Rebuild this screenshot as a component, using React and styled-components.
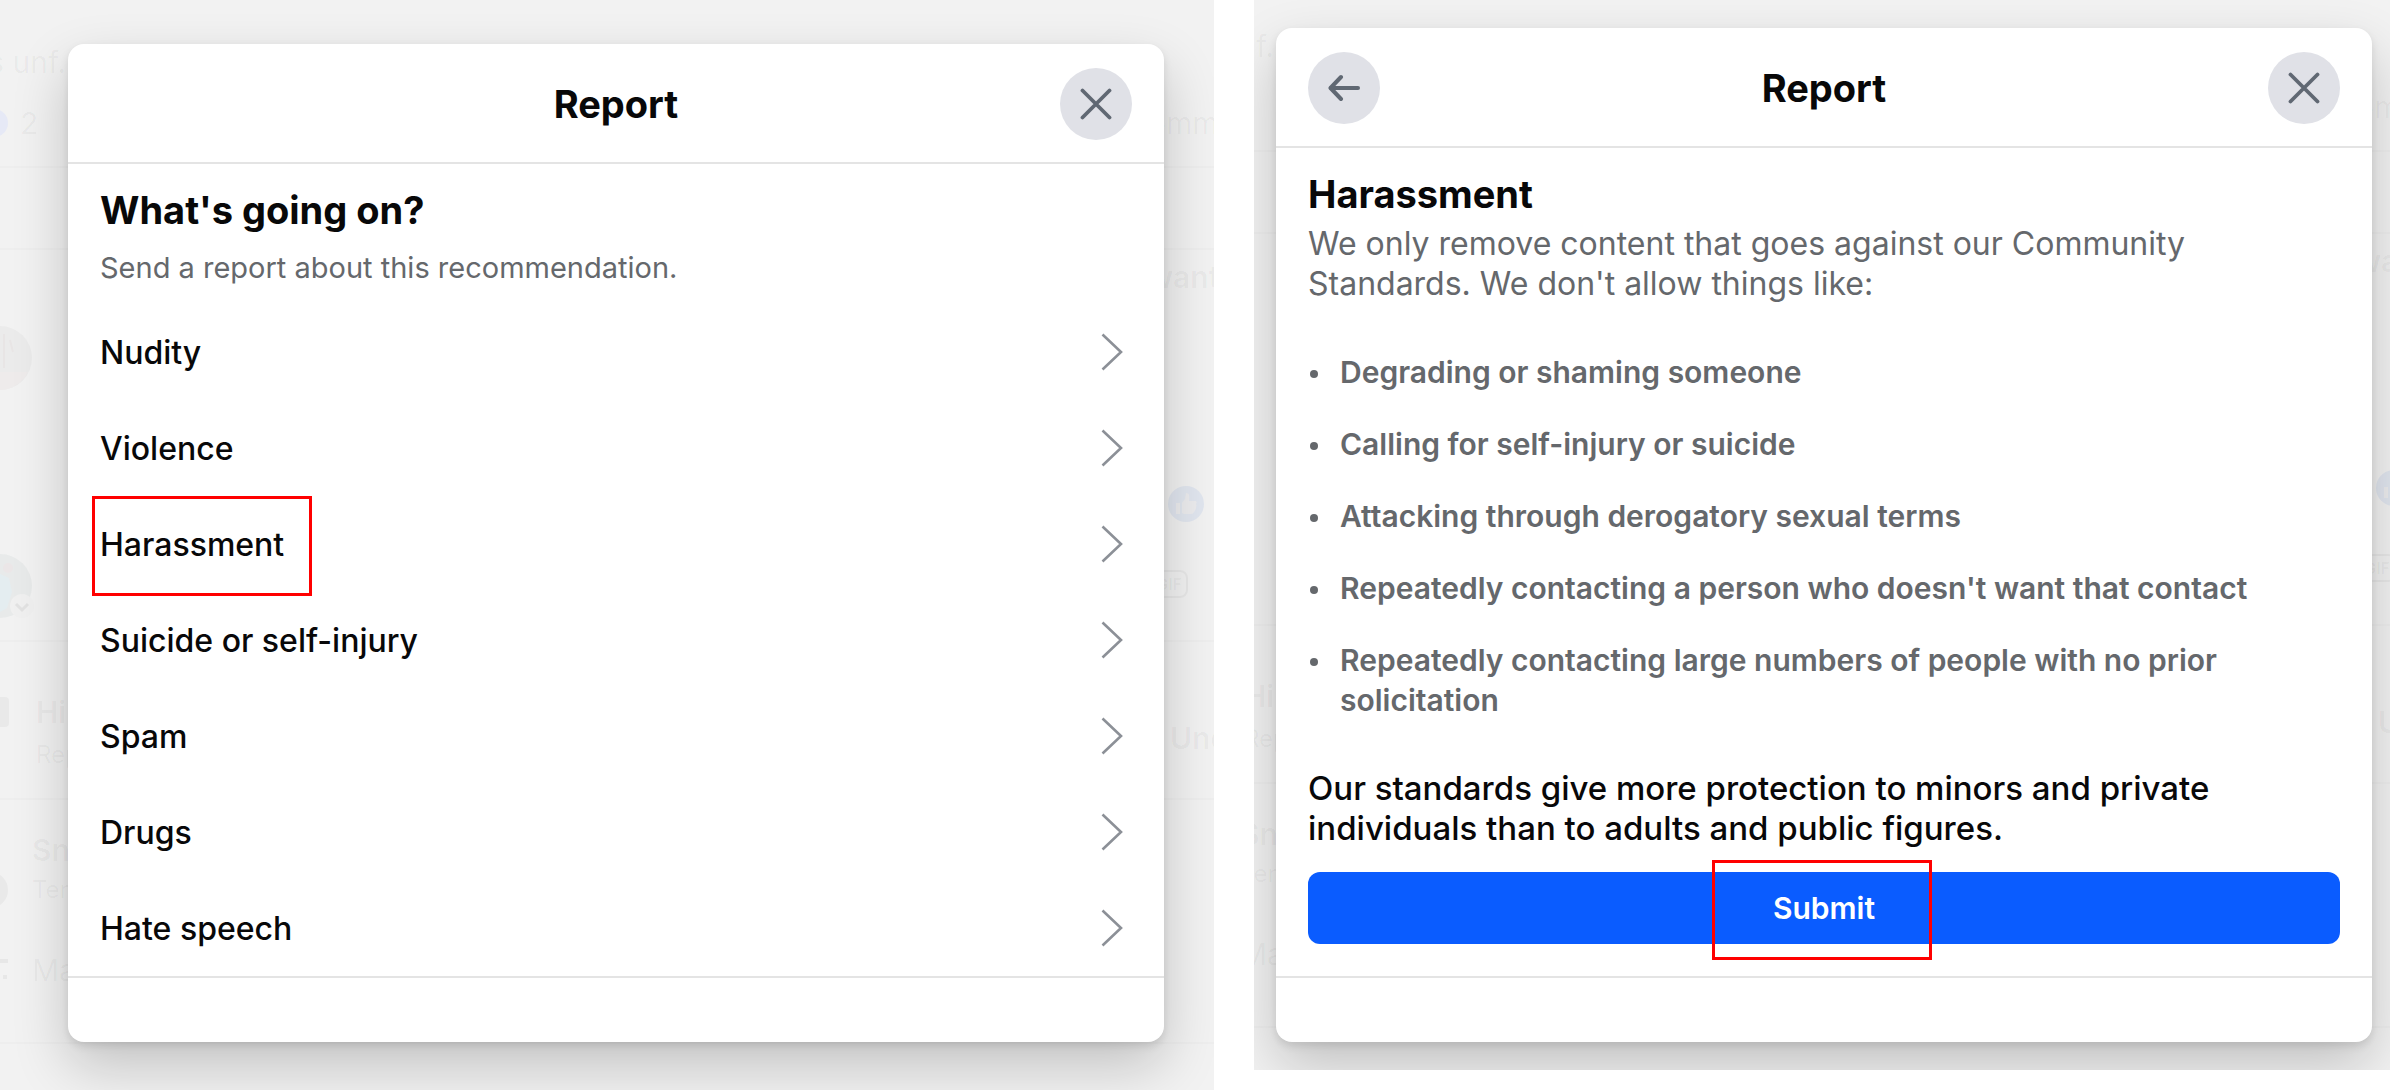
import React from "react";
import styled, { createGlobalStyle } from "styled-components";

const GlobalStyle = createGlobalStyle`
  * { box-sizing: border-box; }
  body {
    margin: 0;
    background: #fff;
    color: #080809;
    font-family: Inter, Roboto, "Liberation Sans", sans-serif;
  }
  h1, h2, p, ul { margin: 0; padding: 0; }
  ul { list-style: none; }
  button { font: inherit; color: inherit; border: 0; cursor: pointer; }
`;

const Page = styled.main`
  display: grid;
  grid-template-columns: 1214fr 1136fr;
  column-gap: 40px;
  align-items: start;
`;

const Scene = styled.section`
  position: relative;
  overflow: hidden;
  background: #f2f2f2;
  padding: ${(p) => p.$padding};
`;

/* Faded feed behind the dialog */

const Feed = styled.div`
  position: absolute;
  inset: ${(p) => p.$inset};
  color: rgba(0, 0, 0, 0.04);
  white-space: nowrap;
`;

const FeedBand = styled.div`
  display: flex;
  justify-content: space-between;
  height: ${(p) => p.$height}px;
  border-bottom: 2px solid rgba(0, 0, 0, 0.015);
`;

const FeedSide = styled.div`
  display: flex;
  flex-direction: column;
  gap: ${(p) => p.$gap || 0}px;
  width: 66px;
  padding-top: ${(p) => p.$top || 0}px;
`;

const FeedLine = styled.div`
  display: flex;
  align-items: center;
  justify-content: ${(p) => (p.$end ? "flex-end" : "flex-start")};
  gap: ${(p) => p.$gap || 24}px;
  font-size: ${(p) => (p.$small ? 24 : 30)}px;
  line-height: 40px;
  height: 40px;
  margin-top: ${(p) => p.$before || 0}px;
  font-weight: ${(p) => (p.$strong ? 600 : 400)};
  padding-left: ${(p) => p.$indent || 0}px;
`;

const FeedArt = styled.svg`
  display: block;
  flex: none;
`;

const GifBadge = styled.span`
  width: 40px;
  border: 2px solid currentColor;
  border-radius: 8px;
  font-size: 16px;
  line-height: 24px;
  font-weight: 600;
  text-align: right;
  padding-right: 4px;
`;

function Backdrop({ inset }) {
  return (
    <Feed $inset={inset} aria-hidden="true">
      <FeedBand $height={168}>
        <FeedSide $top={42} $gap={21}>
          <FeedLine $end>s unf.</FeedLine>
          <FeedLine $gap={12}>
            <FeedArt width="8" height="30">
              <circle cx="-6" cy="15" r="14" fill="#e6e9f6" />
            </FeedArt>
            2
          </FeedLine>
        </FeedSide>
        <FeedSide $top={103}>
          <FeedLine>omm</FeedLine>
        </FeedSide>
      </FeedBand>
      <FeedBand $height={82} />
      <FeedBand $height={392}>
        <FeedSide $top={76} $gap={164}>
          <FeedArt width="32" height="64">
            <circle cx="0" cy="32" r="32" fill="#ebebeb" />
            <path d="M4 8v34M10 14l3 12" stroke="#e8e5e5" strokeWidth="2" />
            <path d="M0 46h28a32 32 0 0 1-28 18z" fill="#eeebeb" />
          </FeedArt>
          <FeedArt width="34" height="68">
            <circle cx="0" cy="32" r="32" fill="#e8eaea" />
            <path d="M0 20l9 4 3 14-5 16-7 4z" fill="#e4edf0" />
            <circle cx="8" cy="14" r="5" fill="#ebe6e7" />
            <circle cx="22" cy="52" r="12" fill="#f0f0f0" />
            <path d="M16 50l6 6 6-6" fill="none" stroke="#e2e2e2" strokeWidth="3" />
          </FeedArt>
        </FeedSide>
        <FeedSide $top={7}>
          <FeedLine $strong>want</FeedLine>
          <FeedLine $before={187} $indent={20}>
            <FeedArt width="36" height="36" viewBox="0 0 36 36">
              <circle cx="18" cy="18" r="18" fill="#e1e6ef" />
              <path
                d="M8 17h4v11H8zM14 17l3-4 1-6c3 0 4 2 3 8h6c2 0 2 2 1 3 1 2 0 3 0 4s-1 3-2 4-1 2-3 2h-7l-2-1z"
                fill="#ececee"
              />
            </FeedArt>
          </FeedLine>
          <FeedLine $before={40}>
            <GifBadge>GIF</GifBadge>
          </FeedLine>
        </FeedSide>
      </FeedBand>
      <FeedBand $height={158}>
        <FeedSide $top={50} $gap={3}>
          <FeedLine $strong $gap={27}>
            <FeedArt width="9" height="30">
              <path d="M0 0h5a4 4 0 0 1 4 4v22a4 4 0 0 1-4 4H0z" fill="#e9e9e9" />
            </FeedArt>
            Hi
          </FeedLine>
          <FeedLine $small $indent={36}>
            Rep
          </FeedLine>
        </FeedSide>
        <FeedSide $top={76}>
          <FeedLine $strong $indent={22}>
            Und
          </FeedLine>
        </FeedSide>
      </FeedBand>
      <FeedBand $height={244}>
        <FeedSide $top={30}>
          <FeedLine $strong $indent={32}>
            Sn
          </FeedLine>
          <FeedLine $small>
            <FeedArt width="8" height="36">
              <circle cx="-10" cy="18" r="18" fill="#e9e9e9" />
            </FeedArt>
            Ten
          </FeedLine>
          <FeedLine $before={40}>
            <FeedArt width="8" height="22">
              <path d="M0 2h8M3 18h4" stroke="#e7e7e7" strokeWidth="4" />
            </FeedArt>
            Ma
          </FeedLine>
        </FeedSide>
      </FeedBand>
    </Feed>
  );
}

/* Dialog */

const Dialog = styled.article`
  position: relative;
  background: #fff;
  border-radius: 16px;
  box-shadow: 0 24px 56px rgba(0, 0, 0, 0.2), 0 4px 8px rgba(0, 0, 0, 0.1);
`;

const DialogHeader = styled.header`
  display: grid;
  grid-template-columns: 72px 1fr 72px;
  align-items: center;
  padding: 24px 32px 22px;
  border-bottom: 2px solid #e4e4e4;
`;

const DialogTitle = styled.h1`
  grid-column: 2;
  text-align: center;
  font-size: 38px;
  line-height: 48px;
  font-weight: 700;
`;

const RoundButton = styled.button`
  display: grid;
  place-items: center;
  width: 72px;
  height: 72px;
  padding: 0;
  border-radius: 50%;
  background: #e0e1e7;
  color: #606873;
`;

const DialogBody = styled.div`
  padding: 16px 32px 0;
`;

const Heading = styled.h2`
  font-size: 38px;
  line-height: 60px;
  font-weight: 700;
`;

const Hint = styled.p`
  padding: 8px 0 16px;
  font-size: 29px;
  line-height: 40px;
  color: #65686c;
`;

const ReasonButton = styled.button`
  position: relative;
  display: flex;
  align-items: center;
  justify-content: space-between;
  width: 100%;
  height: 96px;
  padding: 0 9px 0 0;
  background: none;
  text-align: left;
  font-size: 32px;
  font-weight: 500;
`;

const Copy = styled.p`
  font-size: ${(p) => (p.$strong ? 33 : 32)}px;
  line-height: 40px;
  font-weight: ${(p) => (p.$strong ? 500 : 400)};
  color: ${(p) => (p.$strong ? "#080809" : "#65686c")};
`;

const RuleList = styled.ul`
  display: flex;
  flex-direction: column;
  gap: 32px;
  padding: 48px 0;
`;

const Rule = styled.li`
  display: flex;
  gap: 22px;
  padding-left: 2px;
  font-size: 30px;
  line-height: 40px;
  font-weight: 600;
  color: #65686c;

  &::before {
    content: "";
    flex: none;
    width: 8px;
    height: 8px;
    margin-top: 18px;
    border-radius: 50%;
    background: currentColor;
  }
`;

const SubmitArea = styled.div`
  position: relative;
  padding: 24px 0 32px;
`;

const SubmitButton = styled.button`
  display: block;
  width: 100%;
  height: 72px;
  border-radius: 12px;
  background: #0a5cff;
  color: #fff;
  font-size: 30px;
  font-weight: 600;
`;

const Highlight = styled.span`
  position: absolute;
  top: ${(p) => p.$top};
  left: ${(p) => p.$left};
  width: 220px;
  height: 100px;
  border: 3px solid #ff0000;
  pointer-events: none;
`;

const DialogFooter = styled.footer`
  height: 66px;
  border-top: 2px solid #e4e4e4;
`;

const CloseIcon = () => (
  <svg width="32" height="32" viewBox="0 0 32 32" fill="none" stroke="currentColor" strokeWidth="3.8" strokeLinecap="round">
    <path d="M2.5 2.5l27 27M29.5 2.5l-27 27" />
  </svg>
);

const BackIcon = () => (
  <svg width="32" height="32" viewBox="0 0 32 32" fill="none" stroke="currentColor" strokeWidth="4" strokeLinecap="round" strokeLinejoin="round">
    <path d="M3 16h27" />
    <path d="M13 5L2.5 16l10.5 11" />
  </svg>
);

const ChevronIcon = () => (
  <svg width="22" height="38" viewBox="0 0 22 38" fill="none" stroke="#8c9097" strokeWidth="2.6">
    <path d="M1.5 1.5L20 19 1.5 36.5" />
  </svg>
);

const reasons = [
  "Nudity",
  "Violence",
  "Harassment",
  "Suicide or self-injury",
  "Spam",
  "Drugs",
  "Hate speech",
];

const rules = [
  "Degrading or shaming someone",
  "Calling for self-injury or suicide",
  "Attacking through derogatory sexual terms",
  "Repeatedly contacting a person who doesn't want that contact",
  "Repeatedly contacting large numbers of people with no prior solicitation",
];

function ReportDialog({ canGoBack, children }) {
  return (
    <Dialog>
      <DialogHeader>
        {canGoBack && (
          <RoundButton type="button" aria-label="Back">
            <BackIcon />
          </RoundButton>
        )}
        <DialogTitle>Report</DialogTitle>
        <RoundButton type="button" aria-label="Close">
          <CloseIcon />
        </RoundButton>
      </DialogHeader>
      <DialogBody>{children}</DialogBody>
      <DialogFooter />
    </Dialog>
  );
}

export default function App() {
  return (
    <>
      <GlobalStyle />
      <Page>
        <Scene $padding="44px 50px 48px 68px">
          <Backdrop inset="0" />
          <ReportDialog>
            <Heading>What's going on?</Heading>
            <Hint>Send a report about this recommendation.</Hint>
            <ul>
              {reasons.map((reason) => (
                <li key={reason}>
                  <ReasonButton type="button">
                    {reason}
                    <ChevronIcon />
                    {reason === "Harassment" && <Highlight $top="0" $left="-8px" />}
                  </ReasonButton>
                </li>
              ))}
            </ul>
          </ReportDialog>
        </Scene>
        <Scene $padding="28px 18px 28px 22px">
          <Backdrop inset="-16px -32px 0 -46px" />
          <ReportDialog canGoBack>
            <Heading>Harassment</Heading>
            <Copy>
              We only remove content that goes against our Community Standards. We don't allow
              things like:
            </Copy>
            <RuleList>
              {rules.map((rule) => (
                <Rule key={rule}>{rule}</Rule>
              ))}
            </RuleList>
            <Copy $strong>
              Our standards give more protection to minors and private individuals than to adults
              and public figures.
            </Copy>
            <SubmitArea>
              <SubmitButton type="button">Submit</SubmitButton>
              <Highlight $top="12px" $left="calc(50% - 112px)" />
            </SubmitArea>
          </ReportDialog>
        </Scene>
      </Page>
    </>
  );
}
